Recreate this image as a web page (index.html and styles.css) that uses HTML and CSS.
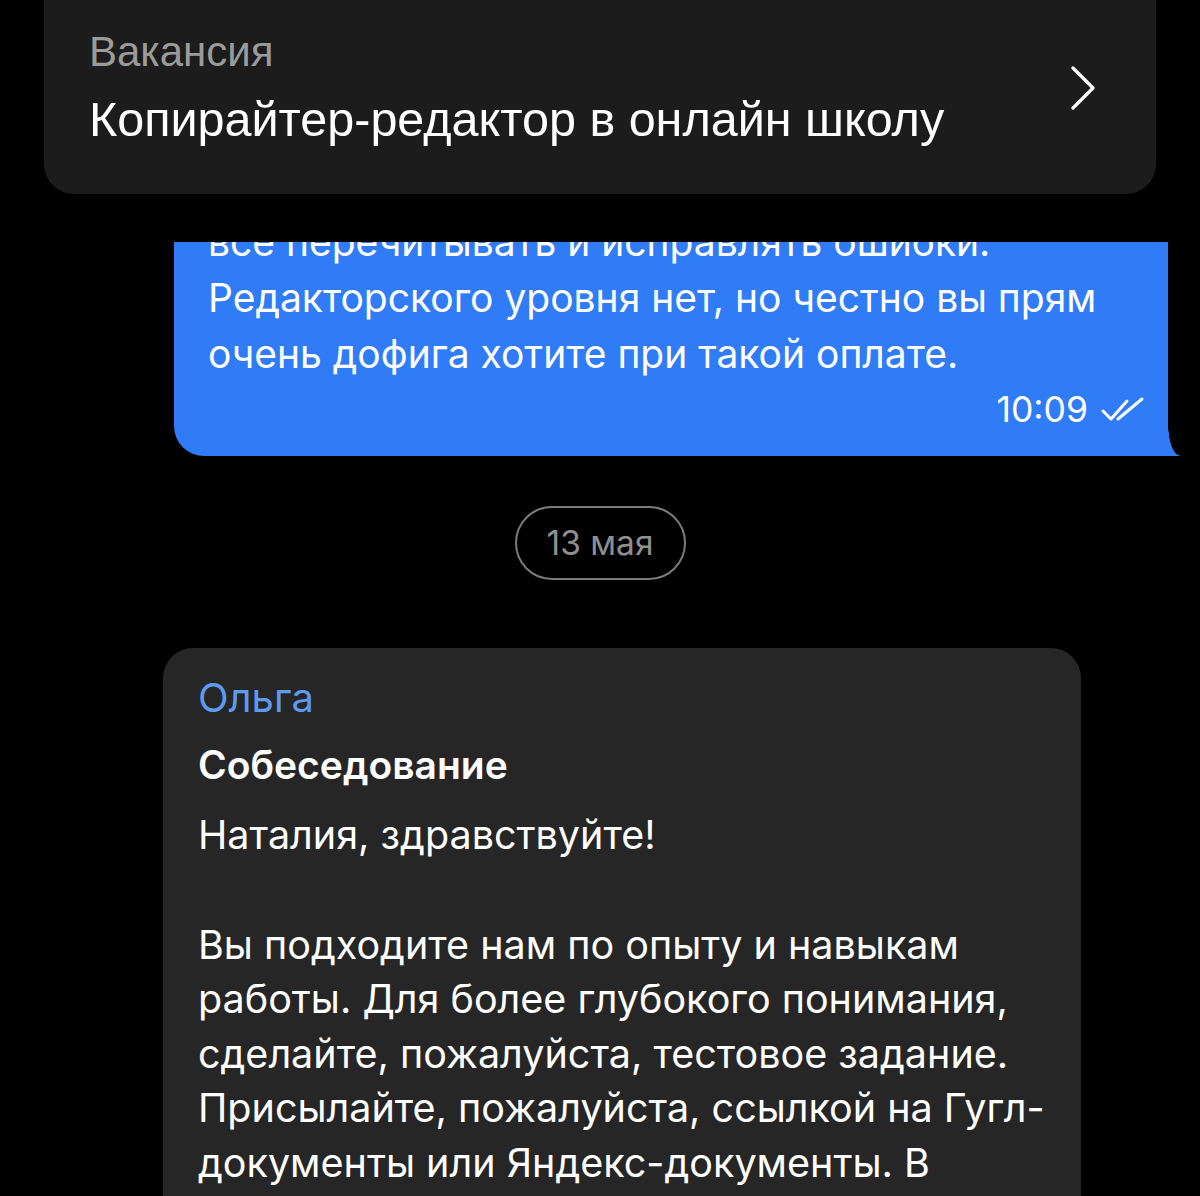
FILE: index.html
```html
<!DOCTYPE html>
<html lang="ru">
<head>
  <meta charset="UTF-8" />
  <meta name="viewport" content="width=device-width, initial-scale=1.0" />
  <title>Чат</title>
  <link rel="stylesheet" href="styles.css">
</head>
<body>
  <div class="vacancy-header">
    <div class="vacancy-text">
      <div class="vacancy-label">Вакансия</div>
      <div class="vacancy-title">Копирайтер-редактор в онлайн школу</div>
    </div>
    <svg class="chevron" viewBox="0 0 26 44" width="26" height="44">
      <path d="M3 2 L23 22 L3 42" fill="none" stroke="#ffffff" stroke-width="3.2" stroke-linecap="round" stroke-linejoin="round"></path>
    </svg>
  </div>

  <div class="chat">
    <div class="bubble bubble-out">
      <div class="bubble-text">все перечитывать и исправлять ошибки. Редакторского уровня нет, но честно вы прям очень дофига хотите при такой оплате.</div>
      <div class="bubble-meta">
        <span class="time">10:09</span>
        <svg class="ticks" viewBox="0 0 46 28" width="46" height="28">
          <path d="M3 15 L11 23 L27 5" fill="none" stroke="#ffffff" stroke-width="3" stroke-linecap="round" stroke-linejoin="round"></path>
          <path d="M18 23 L42 3" fill="none" stroke="#ffffff" stroke-width="3" stroke-linecap="round"></path>
        </svg>
      </div>
    </div>

    <div class="date-row">
      <span class="date-pill">13 мая</span>
    </div>

    <div class="bubble bubble-in">
      <div class="sender">Ольга</div>
      <div class="msg-title">Собеседование</div>
      <p class="msg-par">Наталия, здравствуйте!</p>
      <p class="msg-par">Вы подходите нам по опыту и навыкам работы. Для более глубокого понимания, сделайте, пожалуйста, тестовое задание. Присылайте, пожалуйста, ссылкой на Гугл-документы или Яндекс-документы. В течение недели мы свяжемся с вами.</p>
    </div>
  </div>
</body>
</html>
```

FILE: styles.css
```css
body {
  margin: 0;
  height: 1196px;
  overflow: hidden;
  background-color: #000000;
  color: #ffffff;
  font-family: "Liberation Sans", Arial, sans-serif;
}
.vacancy-header {
  display: flex;
  align-items: flex-start;
  justify-content: space-between;
  margin: 0 44px;
  height: 194px;
  box-sizing: border-box;
  padding: 26px 60px 0 45px;
  background-color: #1c1c1c;
  border-radius: 0 0 30px 30px;
}
.vacancy-label {
  font-size: 42px;
  line-height: 52px;
  color: #9b9b9b;
}
.vacancy-title {
  font-size: 48.5px;
  line-height: 58px;
  margin-top: 12px;
}
.chevron {
  margin-top: 40px;
}
.chat {
  margin-top: 48px;
  height: 954px;
  overflow: hidden;
  font-family: Inter, "Noto Sans", sans-serif;
}
.bubble {
  position: relative;
  box-sizing: border-box;
}
.bubble-out {
  margin: -44px 32px 0 174px;
  padding: 16px 22px 28px 34px;
  background-color: #2f7cf6;
  border-radius: 30px 30px 0 30px;
}
.bubble-out::after {
  content: "";
  position: absolute;
  right: -12px;
  bottom: 0;
  width: 12px;
  height: 32px;
  background: radial-gradient(ellipse 12px 32px at 100% 0, transparent 97%, #2f7cf6 100%);
}
.bubble-text {
  font-size: 39px;
  line-height: 56px;
}
.bubble-meta {
  display: flex;
  justify-content: flex-end;
  align-items: center;
  gap: 12px;
  margin-top: 10px;
}
.time {
  font-size: 35.5px;
  line-height: 36px;
}
.date-row {
  display: flex;
  justify-content: center;
  padding: 50px 0 68px;
}
.date-pill {
  box-sizing: border-box;
  width: 171px;
  height: 74px;
  border: 2px solid #7b7b7b;
  border-radius: 37px;
  display: flex;
  align-items: center;
  justify-content: center;
  font-size: 33.5px;
  color: #8f8f8f;
}
.bubble-in {
  margin: 0 119px 0 163px;
  padding: 28px 30px 40px 35px;
  background-color: #262626;
  border-radius: 30px;
}
.sender {
  font-size: 40px;
  line-height: 44px;
  color: #5c9bef;
}
.msg-title {
  font-size: 39px;
  line-height: 54px;
  font-weight: 600;
  margin-top: 18px;
}
.msg-par {
  margin: 16px 0 55px;
  font-size: 39.5px;
  line-height: 54.5px;
}
.msg-par + .msg-par {
  margin-top: 0;
}
```
